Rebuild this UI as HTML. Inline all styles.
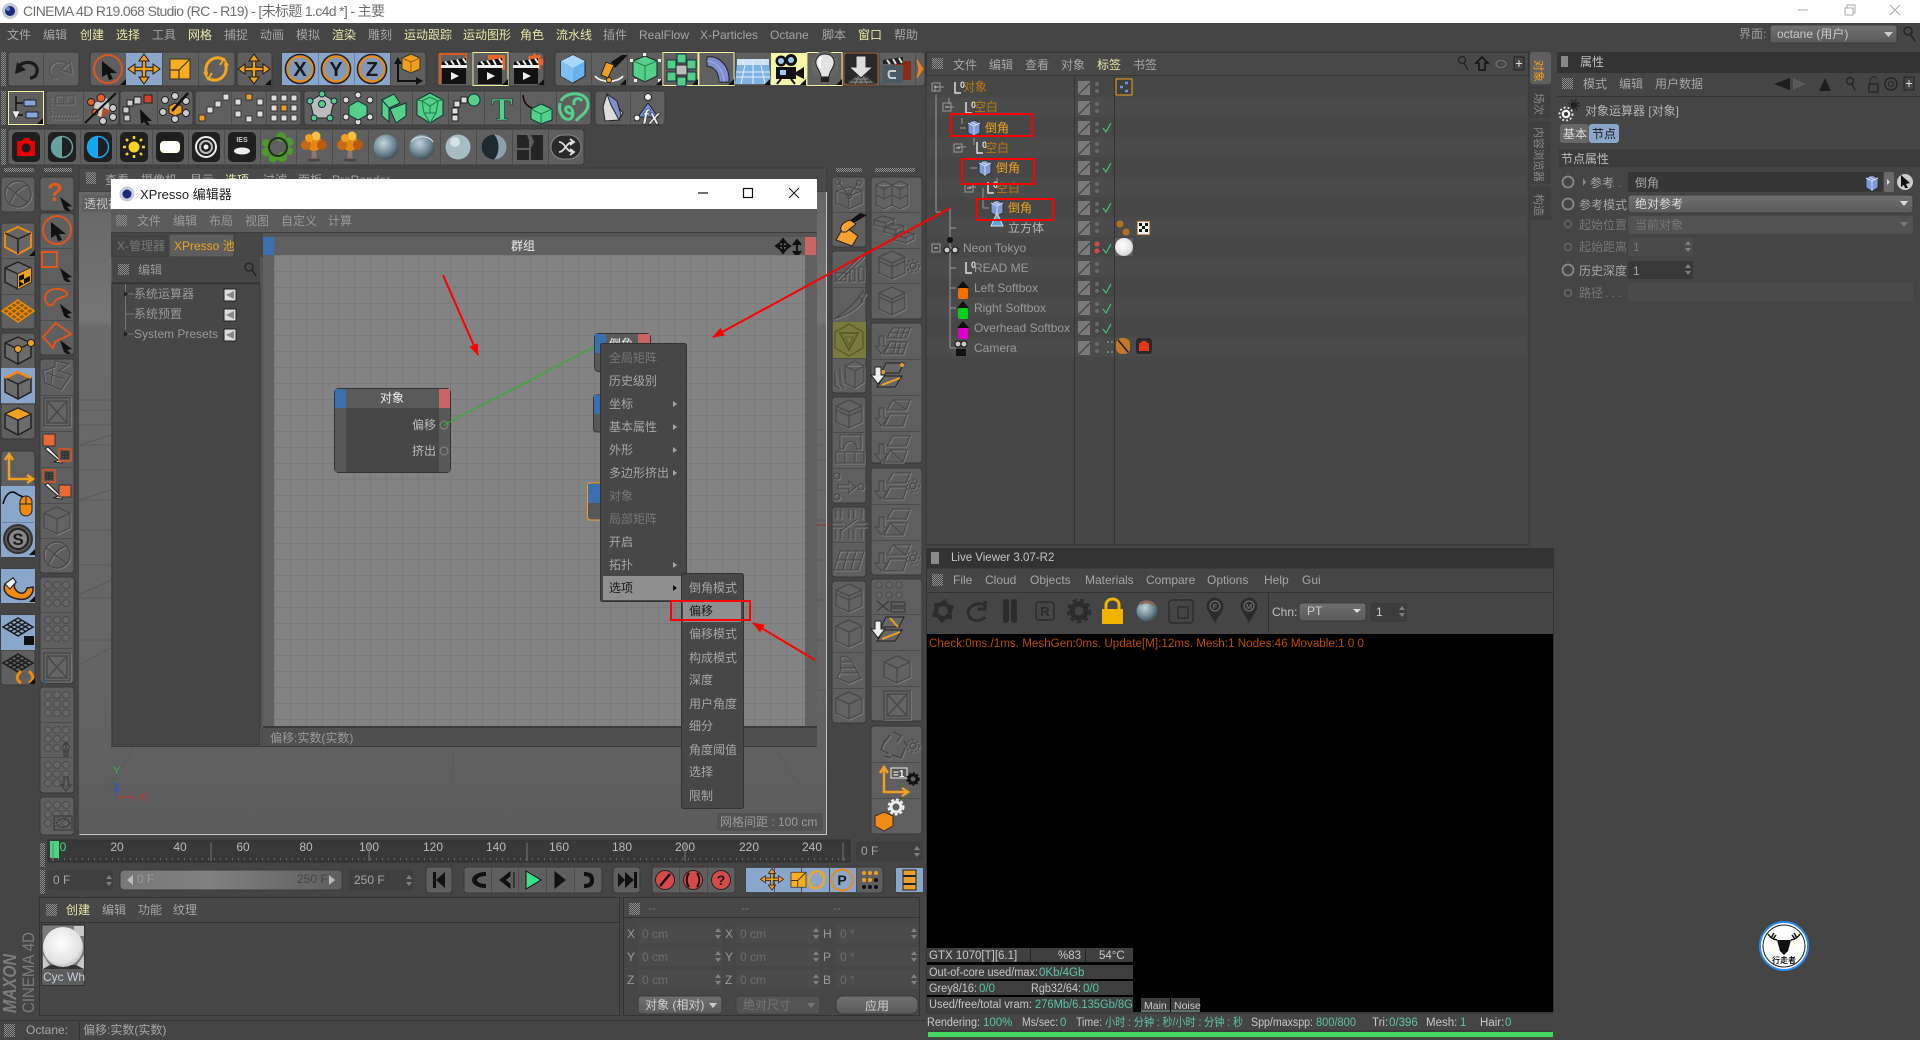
<!DOCTYPE html>
<html><head><meta charset="utf-8"><title>CINEMA 4D</title>
<style>
html,body{margin:0;padding:0;background:#454545;overflow:hidden}
svg{display:block}
text{font-family:"Liberation Sans","Noto Sans CJK SC",sans-serif;font-size:12px;fill:#a6a6a6}
.y{fill:#e8e8a8}.o{fill:#f0a41e}.od{fill:#b8780e}.w{fill:#eee}.d{fill:#767676}.k{fill:#1a1a1a}.m{fill:#9a9a9a}
.s{font-size:11.5px;fill:#c8c8c8}.t{font-size:11.5px;fill:#5cc4a6}.dim{fill:#6e6e6e}
</style></head><body>
<svg width="1920" height="1040" viewBox="0 0 1920 1040" xmlns="http://www.w3.org/2000/svg">
<defs>
<filter id="em" x="-10%" y="-10%" width="125%" height="125%"><feDropShadow dx=".9" dy=".9" stdDeviation="0" flood-color="#7e7e7e"/></filter>
<pattern id="gp" width="2" height="2" patternUnits="userSpaceOnUse"><rect width="1" height="1" fill="#8e8e8e"/><rect x="1" y="1" width="1" height="1" fill="#8e8e8e"/></pattern>
<pattern id="grid" width="16" height="16" patternUnits="userSpaceOnUse" x="274" y="255"><rect width="16" height="16" fill="#838383"/><path d="M0 .5H16M.5 0V16" stroke="#7a7a7a"/></pattern>
<linearGradient id="vp" x1="0" y1="0" x2="0" y2="1"><stop offset="0" stop-color="#666"/><stop offset=".2" stop-color="#767676"/><stop offset=".21" stop-color="#6a6a6a"/><stop offset=".7" stop-color="#666"/><stop offset="1" stop-color="#5c5c5c"/></linearGradient>
<linearGradient id="bt" x1="0" y1="0" x2="0" y2="1"><stop offset="0" stop-color="#707070"/><stop offset="1" stop-color="#5a5a5a"/></linearGradient>
<linearGradient id="sl" x1="0" y1="0" x2="1" y2="0"><stop offset="0" stop-color="#777"/><stop offset=".4" stop-color="#808080"/><stop offset="1" stop-color="#5f5f5f"/></linearGradient>
<radialGradient id="sg" cx=".4" cy=".35" r=".7"><stop offset="0" stop-color="#c4d4dc"/><stop offset=".6" stop-color="#6e8894"/><stop offset="1" stop-color="#37464e"/></radialGradient>
<radialGradient id="sw" cx=".45" cy=".4" r=".7"><stop offset="0" stop-color="#fff"/><stop offset=".7" stop-color="#e2e2e2"/><stop offset="1" stop-color="#aaa"/></radialGradient>
<marker id="ah" markerWidth="12" markerHeight="9" refX="11" refY="4.5" orient="auto" markerUnits="userSpaceOnUse"><path d="M0 0 12 4.5 0 9Z" fill="#f00"/></marker>

<path id="tri" d="M35 33H29L35 27Z" fill="#111"/>
<g id="d1" filter="url(#em)" fill="#636363" stroke="#4a4a4a" stroke-width="1.300"><path d="M18 4 31 10V25L18 31 5 25V10Z"/><path d="M5 10 18 16 31 10M18 16V31" fill="none"/></g>
<g id="d2" filter="url(#em)" fill="#636363" stroke="#4a4a4a" stroke-width="1.300"><path d="M18 3 31 9V25L18 31 5 25V9Z"/><path d="M5 9 18 15 31 9M18 15V31M5 13 18 19 31 13" fill="none"/></g>
<g id="dcd" filter="url(#em)" fill="none" stroke="#4a4a4a" stroke-width="1.300"><path d="M18 10 31 14V26L18 32 5 26V14ZM5 14 18 19 31 14M18 19V32M7 4 18 19 27 6"/><circle cx="7" cy="5" r="2.500"/><circle cx="18" cy="19" r="2.500"/><circle cx="28" cy="6" r="2.500"/></g>
<g id="dblk" filter="url(#em)" fill="#636363" stroke="#4a4a4a" stroke-width="1.200"><path d="M3 7 11 3 19 7V17L11 21 3 17ZM19 7 27 3 35 7V17L27 21 19 17ZM3 17 11 21 19 17V27L11 31 3 27ZM19 17 27 21 35 17V27L27 31 19 27ZM3 7 11 11 19 7M11 11V21M19 7 27 11 35 7M27 11V21"/></g>
<g id="dbrk" filter="url(#em)" fill="#636363" stroke="#4a4a4a" stroke-width="1.200"><path d="M2 7 10 3 22 6 14 10ZM2 7V12L14 15V10ZM22 6V11L14 15M12 14 20 10 32 13 24 17ZM12 14V19L24 22V17ZM32 13V18L24 22M22 22 30 18 42 21 34 25ZM22 22V27L34 30V25ZM42 21V26L34 30"/></g>
<g id="dgr" filter="url(#em)" fill="none" stroke="#4a4a4a" stroke-width="1.500"><circle cx="0" cy="0" r="3"/><circle cx="0" cy="0" r="6" stroke-dasharray="2.500 2"/></g>
<g id="d3" filter="url(#em)" fill="none" stroke="#4a4a4a" stroke-width="1.300"><path d="M17 4H34L30 14H11ZM14 18H31L27 30H8Z"/><path d="M3 12H8V22H12L5.500 30 -1 22H3Z" fill="#636363"/></g>
<g id="d3a" filter="url(#em)" fill="none" stroke="#4a4a4a" stroke-width="1.300"><path d="M17 4H34L30 14H11ZM14 18H31L27 30H8ZM23 4 20 14M29 4 25 14M15 9H32M20 18 17 30M25 18 22 30M11 24H29"/><path d="M3 12H8V22H12L5.500 30 -1 22H3Z" fill="#636363"/></g>
<g id="d3b" filter="url(#em)" fill="none" stroke="#4a4a4a" stroke-width="1.300"><path d="M17 4H34L30 14H11ZM14 18H31L27 30H8ZM17 4 30 14"/><path d="M3 12H8V22H12L5.500 30 -1 22H3Z" fill="#636363"/></g>
<g id="d3c" filter="url(#em)" fill="none" stroke="#4a4a4a" stroke-width="1.300"><path d="M17 4H34L30 14H11ZM14 18H31L27 30H8ZM14 18 27 30"/><path d="M3 12H8V22H12L5.500 30 -1 22H3Z" fill="#636363"/></g>
<g id="dk" filter="url(#em)" fill="#636363" stroke="#4a4a4a" stroke-width="1.300"><path d="M3 32C12 26 22 18 28 10L32 14C26 22 16 28 3 32ZM26 12 32 4 35 7 30 15"/></g>
<g id="dbk" filter="url(#em)" fill="#636363" stroke="#4a4a4a" stroke-width="1.200"><path d="M14 8 24 3 33 8V24L24 30 14 25ZM14 8 24 13 33 8M24 13V30M9 10V27L14 30M4 13V28L9 31"/></g>
<g id="d5" filter="url(#em)" fill="none" stroke="#4a4a4a" stroke-width="1.300"><path d="M4 30 31 4 33 6 9 30ZM5 22H15V30H5ZM19 18V30H24V18ZM28 16V30H33V16Z"/></g>
<g id="darc" filter="url(#em)" fill="none" stroke="#4a4a4a" stroke-width="1.300"><path d="M9 3H30V17H26C26 7 13 7 13 17H9ZM5 20H33V31H5ZM14 20V31M24 20V31"/></g>
<g id="darr" filter="url(#em)" fill="none" stroke="#4a4a4a" stroke-width="1.300"><circle cx="6" cy="7" r="3"/><circle cx="6" cy="28" r="3"/><circle cx="30" cy="18" r="3"/><path d="M7 16H18V12L25 18 18 24V20H7Z"/></g>
<g id="dcut" filter="url(#em)" fill="none" stroke="#4a4a4a" stroke-width="1.300"><path d="M5 2V12M5 22V32M18 2V12M18 22V32M31 2V12M31 22V32M10 2V12M10 22V32M23 2V12M23 22V32M1 16H12M24 16H36M1 20H12M24 20H36M10 24 26 12"/></g>
<g id="dgp" filter="url(#em)" fill="none" stroke="#4a4a4a" stroke-width="1.300"><path d="M9 9H33L27 28H3ZM17 9 12 28M25 9 20 28M6 18H30"/></g>
<g id="d6" fill="#666" stroke="#4c4c4c"><circle cx="9" cy="8" r="3.500"/><circle cx="18" cy="8" r="3.500"/><circle cx="27" cy="8" r="3.500"/><circle cx="9" cy="17" r="3.500"/><circle cx="18" cy="17" r="3.500"/><circle cx="27" cy="17" r="3.500"/><circle cx="9" cy="26" r="3.500"/><circle cx="18" cy="26" r="3.500"/><circle cx="27" cy="26" r="3.500"/></g>
<g id="d7" filter="url(#em)" fill="none" stroke="#4a4a4a" stroke-width="1.500"><circle cx="18" cy="17" r="13"/><path d="M7 10C14 14 22 22 28 26M10 26C14 16 20 10 28 8"/></g>
<g id="d8" filter="url(#em)" fill="#656565" stroke="#4a4a4a" stroke-width="1.500"><rect x="5" y="3" width="26" height="28"/><rect x="8" y="6" width="20" height="22"/><path d="M8 6 28 28M28 6 8 28" fill="none"/></g>
<g id="d9" filter="url(#em)" fill="none" stroke="#4a4a4a" stroke-width="1.300"><path d="M10 5C16 3 22 8 23 14L30 26 18 31 6 26 10 18ZM10 10H22M9 16H25M8 21H28"/></g>
<g id="dst" filter="url(#em)" fill="none" stroke="#4a4a4a" stroke-width="1.300"><path d="M16 2 30 5 20 12 32 16 22 31 6 24 4 12 16 8ZM8 14 24 20M14 10 12 26"/></g>
<g id="dlens" fill="none" stroke="#3e3e3e" stroke-width="1.300"><rect x="15" y="19" width="18" height="14"/><path d="M17 26C22 20 26 20 31 26C26 32 22 32 17 26Z"/></g>
<g id="drec" filter="url(#em)" fill="none" stroke="#4a4a4a" stroke-width="2"><path d="M16 4 24 8 20 14M8 12 4 22 12 26M28 20 24 30 15 27M13 7 8 14M27 13 32 20M7 28 14 30"/></g>

<g id="cube"><path d="M18 4 31 10V24L18 31 5 24V10Z" fill="#6b6b6b" stroke="#222" stroke-width="1.500"/><path d="M5 10 18 16 31 10M18 16V31" fill="none" stroke="#222" stroke-width="1.500"/></g>
<g id="ic1"><path d="M18 4 31 10V24L18 31 5 24V10Z" fill="#666" stroke="#f08a10" stroke-width="2"/><path d="M5 10 18 16 31 10M18 16V31" fill="none" stroke="#222" stroke-width="1.500"/></g>
<g id="ic2"><use href="#cube"/><path d="M18 16 31 10V24L18 31Z" fill="#f0a020"/><path d="M19 18 24 16V21L19 23ZM24 21 30 18V23L24 26ZM19 23V29L24 26Z" fill="#111"/></g>
<g id="ic3" fill="none" stroke="#e8890c" stroke-width="1.600"><path d="M18 6 34 17 18 28 2 17Z" fill="#8b5a12"/><path d="M10 11 26 23M14 8.500 30 20M6 14 22 26M26 11 10 23M22 8.500 6 20M30 14 14 26"/></g>
<g id="ic4"><use href="#cube"/><circle cx="18" cy="16" r="3.500" fill="#f0a020" stroke="#222"/><circle cx="31" cy="10" r="3.500" fill="#f0a020" stroke="#222"/></g>
<g id="ic5"><use href="#cube"/><path d="M5 10 18 4 31 10" fill="none" stroke="#f08a10" stroke-width="2.500"/></g>
<g id="ic6"><use href="#cube"/><path d="M18 4 31 10 18 16 5 10Z" fill="#f0a020" stroke="#222"/></g>
<g id="axis" fill="none" stroke="#f0a020" stroke-width="2.500"><path d="M9 5V28H31"/><path d="M5 9 9 3 13 9M27 24 33 28 27 32"/></g>
<g id="mouse"><path d="M3 18C6 6 12 4 17 8C20 10 22 10 25 12" fill="none" stroke="#111" stroke-width="1.600"/><rect x="20" y="10" width="12" height="20" rx="6" fill="#f08a10" stroke="#222"/><path d="M20 18H32M26 10V18" stroke="#222"/></g>
<g id="sic"><circle cx="18" cy="17" r="14" fill="#555" stroke="#333" stroke-width="2"/><circle cx="18" cy="17" r="10" fill="#888" stroke="#222" stroke-width="2"/><text x="18" y="23" text-anchor="middle" class="k" style="font-size:17px;font-weight:bold">S</text></g>
<g id="mag"><path d="M5 15 13 9 16 13C13 16 14 20 18 23 23 26 26 23 27 19L33 18C34 26 27 32 18 30 7 28 2 22 5 15Z" fill="#f08a10" stroke="#222" stroke-width="1.500"/><path d="M5 15 13 9 16 13 10 20Z" fill="#eee" stroke="#222"/></g>
<g id="gridb" fill="none" stroke="#1c1c1c" stroke-width="1.500"><path d="M18 3 33 12 18 21 3 12ZM10 7.500 26 16.500M14 5 29 14M7 9.500 22 18.500M26 7.500 10 16.500M22 5 7 14M29 9.500 14 18.500"/></g>
<g id="qm"><text x="15" y="24" text-anchor="middle" style="font-size:26px;font-weight:bold;fill:#e05a20">?</text><path d="M20 20 32 29 27 30 31 34H27L24 32Z" fill="#111"/></g>
<g id="cur2"><circle cx="17" cy="17" r="14" fill="none" stroke="#e0561c" stroke-width="2"/><path d="M11 9 26 21 19 21 22 27 18 28 16 22 11 25Z" fill="#111"/></g>
<g id="sel1"><rect x="2" y="4" width="15" height="15" fill="none" stroke="#e0561c" stroke-width="2"/><path d="M20 20 32 29 27 30 31 34H27L24 32Z" fill="#111"/></g>
<g id="sel2"><path d="M5 14C5 4 22 2 27 9 29 13 18 13 15 17 12 24 6 22 5 14Z" fill="none" stroke="#e0561c" stroke-width="2"/><path d="M20 20 32 29 27 30 31 34H27L24 32Z" fill="#111"/></g>
<g id="sel3"><path d="M16 3 31 14 15 22 13 28 3 17Z" fill="none" stroke="#e0561c" stroke-width="2"/><path d="M20 20 32 29 27 30 31 34H27L24 32Z" fill="#111"/></g>
<g id="sw1"><rect x="3" y="3" width="12" height="12" fill="#ea6a35" stroke="#333"/><path d="M5 18 18 29 14 31 22 32 22 24 19 27 8 16Z" fill="#eee" stroke="#222"/><rect x="19" y="18" width="12" height="12" fill="#555" stroke="#e0561c" stroke-width="1.500"/><path d="M22 21H28V27H22ZM25 21V27M22 24H28" fill="none" stroke="#222"/></g>
<g id="sw2"><rect x="3" y="3" width="12" height="12" fill="#555" stroke="#e0561c" stroke-width="1.500"/><path d="M6 6H12V12H6ZM9 6V12M6 9H12" fill="none" stroke="#222"/><path d="M5 18 18 29 14 31 22 32 22 24 19 27 8 16Z" fill="#eee" stroke="#222"/><rect x="19" y="18" width="12" height="12" fill="#ea6a35" stroke="#333"/></g>

<g id="undo" fill="none" stroke="#1a1a1a" stroke-width="3.200"><path d="M12 13C20 7 31 12 29 20 28 25 24 26 22 26"/><path d="M7 22 9 10 18 18Z" fill="#1a1a1a" stroke="none"/></g>
<g id="redo" filter="url(#em)" fill="none" stroke="#525252" stroke-width="1.500"><path d="M24 12C16 6 5 12 7 20 8 25 12 26 14 26"/><path d="M29 22 27 10 18 18Z"/></g>
<g id="mv"><path d="M18 6V28M6 17H30" stroke="#1a1a1a" stroke-width="4.500"/><path d="M18 6V28M6 17H30" stroke="#f0a020" stroke-width="2.500"/><path d="M18 2 23 9H13ZM18 32 23 25H13ZM2 17 9 12V22ZM34 17 27 12V22Z" fill="#f0a020" stroke="#1a1a1a"/></g>
<g id="scl"><rect x="8" y="7" width="20" height="20" fill="#f8ae1e" stroke="#333"/><path d="M8 18H17L28 7M17 18V27" fill="none" stroke="#4a3410" stroke-width="1.200"/></g>
<g id="rot" fill="none" stroke="#f0a820" stroke-width="3"><path d="M26 8C16 1 4 12 9 23"/><path d="M10 26C20 33 32 22 27 11"/><path d="M6 20 10 27 14 21M30 14 26 7 22 13" stroke-width="2"/></g>
<g id="ring"><circle cx="18" cy="17" r="14.500" fill="none" stroke="#222" stroke-width="1.600"/><circle cx="18" cy="17" r="12.500" fill="#7f99bb" stroke="#e88a14" stroke-width="2.200"/></g>
<g id="coord"><path d="M8 8V29H30" fill="none" stroke="#111" stroke-width="2"/><path d="M4 12 8 5 12 12M26 25 33 29 26 33" fill="#111"/><path d="M21 2 30 6V17L21 21 12 17V6Z" fill="#f0a020" stroke="#333"/><path d="M12 6 21 10 30 6M21 10V21" fill="none" stroke="#9b5e0a"/></g>
<g id="clap"><rect x="5" y="15" width="24" height="17" fill="#111"/><path d="M5 10 29 6V14H5Z" fill="#111"/><path d="M5 14H29V15H5ZM8 9.500 11 13M14 8.500 17 13M20 7.500 23 13M26 6.500 29 11" stroke="#eee" stroke-width="2"/><path d="M14 20 22 24 14 28Z" fill="#eee"/></g>
<g id="bcube"><path d="M18 3 30 9V24L18 31 6 24V9Z" fill="#6bb0e8" stroke="#222"/><path d="M18 3 30 9 18 16 6 9Z" fill="#a8d8f8"/><path d="M18 16 6 9V24L18 31Z" fill="#7fc0f4"/></g>
<g id="pen"><path d="M20 10 31 3H36V4L24 16Z" fill="#111"/><path d="M23 13 17 26 10 23 15 10Z" fill="#f0a020" stroke="#222"/><path d="M4 24C9 31 27 31 32 24" fill="none" stroke="#eee" stroke-width="1.800"/><circle cx="18" cy="28" r="2.500" fill="#f0a020" stroke="#222"/></g>
<g id="gcube"><path d="M18 4 30 9V24L18 30 6 24V9Z" fill="#55d08a" stroke="#222"/><path d="M6 9 18 14 30 9M18 14V30" fill="none" stroke="#1f7f4c"/><rect x="3" y="7" width="3" height="3" fill="#eee"/><rect x="31" y="7" width="3" height="3" fill="#eee"/><rect x="16" y="1" width="3" height="3" fill="#eee"/><rect x="31" y="27" width="3" height="3" fill="#eee"/><rect x="7" y="27" width="3" height="3" fill="#eee"/></g>
<g id="clon"><g fill="#55cf88" stroke="#134"><rect x="14" y="2" width="9" height="9"/><rect x="24" y="8" width="9" height="9"/><rect x="24" y="20" width="9" height="9"/><rect x="14" y="25" width="9" height="9"/><rect x="4" y="20" width="9" height="9"/><rect x="4" y="8" width="9" height="9"/></g><rect x="13" y="13" width="11" height="10" fill="#bbb" stroke="#222"/></g>
<g id="bend"><path d="M8 5C20 3 31 14 30 30H20C20 21 16 15 8 14Z" fill="#7f8fd0" stroke="#222"/><path d="M8 9C17 9 25 18 25 30" fill="none" stroke="#a0aee8"/></g>
<g id="floor"><path d="M2 7H34V13H2Z" fill="#cfe2f5"/><path d="M2 13H34L36 32H0Z" fill="#7fb2e4"/><path d="M10 13 6 32M18 13V32M26 13 30 32M1 20H35M1 25H35M8 7V13M18 7V13M28 7V13" stroke="#e4f0fa" stroke-width="1"/></g>
<g id="cam"><circle cx="10" cy="9" r="5.500" fill="#111"/><circle cx="20" cy="8" r="6" fill="#111"/><circle cx="10" cy="9" r="3" fill="#9cc8f0"/><circle cx="20" cy="8" r="3" fill="#9cc8f0"/><rect x="5" y="15" width="20" height="12" fill="#111"/><rect x="9" y="18" width="6" height="5" fill="#9cc8f0"/><path d="M25 20 33 15V27L25 23Z" fill="#111"/><path d="M10 27 6 32M20 27 24 32" stroke="#111" stroke-width="2"/></g>
<g id="bulb"><circle cx="18" cy="13" r="14" fill="#666"/><path d="M18 2C10 2 7 9 10 15 12 19 14 21 14 25H22C22 21 24 19 26 15 29 9 26 2 18 2Z" fill="#e4e4e4" stroke="#222"/><path d="M15 5C11 8 12 13 14 16" stroke="#fff" fill="none" stroke-width="2"/><rect x="14" y="25" width="8" height="5" fill="#222"/></g>
<g id="dnf"><rect x="1" y="1" width="34" height="32" rx="3" fill="#2a2a2a" stroke="#a85a30"/><path d="M3 32 18 20 33 32Z" fill="#444"/><path d="M7 30H29M11 27H25M18 20V32M12 32 18 20M24 32 18 20" stroke="#8a8a8a"/><path d="M13 4H23V15H30L18 26 6 15H13Z" fill="#ddd" stroke="#222"/></g>
<g id="clap2"><rect x="14" y="9" width="18" height="19" fill="#8a2c14"/><rect x="4" y="13" width="20" height="18" fill="#4a5a64"/><path d="M4 8 24 5V12H4Z" fill="#222"/><path d="M8 8 11 12M14 7 17 12M20 6 23 11" stroke="#ddd" stroke-width="2"/><path d="M17 19H11C9 19 9 26 12 26H17" fill="none" stroke="#ccc" stroke-width="2"/></g>

<g id="hier"><path d="M8 5V24M8 12H15M8 24H15" stroke="#111" stroke-width="1.500" fill="none"/><rect x="16" y="9" width="12" height="6" fill="#8aa4dc" stroke="#222"/><rect x="18" y="21" width="12" height="6" fill="#8aa4dc" stroke="#222"/><path d="M4 20H8V14H8V20H12L8 28Z" fill="#eee" stroke="#222" stroke-width=".5"/></g>
<g id="dimt" filter="url(#em)" fill="none" stroke="#4e4e4e" stroke-width="1.200"><rect x="10" y="5" width="8" height="8"/><rect x="20" y="5" width="8" height="8"/><path d="M5 6V28H32M5 24H32" stroke-dasharray="2 1"/></g>
<g id="dn1"><path d="M12 12 24 7 28 20 18 26 10 22Z" fill="#ccc"/><path d="M20 16 28 20 18 28Z" fill="#a8502c"/><circle cx="18" cy="7" r="4" fill="#e8602c" stroke="#222"/><circle cx="8" cy="11" r="3.500" fill="#e8602c" stroke="#222"/><circle cx="30" cy="17" r="3.500" fill="#ccc" stroke="#222"/><circle cx="12" cy="21" r="3" fill="#e8602c" stroke="#222"/><circle cx="30" cy="26" r="3.500" fill="#ccc" stroke="#222"/><circle cx="20" cy="30" r="3.500" fill="#ccc" stroke="#222"/><path d="M2 32 33 2" stroke="#111" stroke-width="2"/></g>
<g id="nl"><rect x="4" y="24" width="6" height="6" fill="#ccc" stroke="#222"/><rect x="3" y="16" width="6" height="6" fill="#ccc" stroke="#222"/><rect x="7" y="9" width="6" height="6" fill="#ccc" stroke="#222"/><rect x="14" y="6" width="7" height="7" fill="#ccc" stroke="#222"/><rect x="24" y="4" width="8" height="8" fill="#d84028" stroke="#222"/><path d="M20 18 32 30 27 30 30 34 27 34 24 31 21 33Z" fill="#111"/></g>
<g id="nl2"><circle cx="8" cy="9" r="3.500" fill="#ccc" stroke="#222"/><circle cx="18" cy="5" r="3.500" fill="#ccc" stroke="#222"/><circle cx="29" cy="10" r="3.500" fill="#ccc" stroke="#222"/><circle cx="6" cy="21" r="3.500" fill="#ccc" stroke="#222"/><circle cx="29" cy="22" r="3.500" fill="#ccc" stroke="#222"/><circle cx="18" cy="28" r="3.500" fill="#ccc" stroke="#222"/><path d="M18 12 25 15V22L18 25 12 22V15Z" fill="#f0a020" stroke="#222"/><path d="M15 20 31 2" stroke="#111" stroke-width="2.500"/></g>
<g id="p1" fill="#ddd" stroke="#333"><rect x="4" y="24" width="6" height="6" fill="#f0a020"/><rect x="12" y="16" width="6" height="6"/><rect x="20" y="10" width="6" height="6"/><rect x="28" y="3" width="6" height="6"/></g>
<g id="p2" fill="#ddd" stroke="#333"><rect x="15" y="3" width="6" height="6" fill="#f0a020"/><rect x="26" y="8" width="6" height="6"/><rect x="26" y="20" width="6" height="6"/><rect x="15" y="25" width="6" height="6"/><rect x="4" y="20" width="6" height="6"/><rect x="4" y="8" width="6" height="6"/></g>
<g id="p3" fill="#ddd" stroke="#333"><rect x="5" y="4" width="6" height="6"/><rect x="15" y="4" width="6" height="6"/><rect x="25" y="4" width="6" height="6"/><rect x="5" y="14" width="6" height="6"/><rect x="15" y="14" width="6" height="6" fill="#f0a020"/><rect x="25" y="14" width="6" height="6"/><rect x="5" y="24" width="6" height="6"/><rect x="15" y="24" width="6" height="6"/><rect x="25" y="24" width="6" height="6"/></g>
<g id="g1"><path d="M18 3 30 10 26 27 10 27 6 10Z" fill="#bbb" stroke="#222"/><g fill="#55cf88" stroke="#124"><circle cx="18" cy="13" r="3.500"/><circle cx="6" cy="10" r="3"/><circle cx="30" cy="10" r="3"/><circle cx="10" cy="27" r="3"/><circle cx="26" cy="27" r="3"/><circle cx="18" cy="3" r="3"/></g></g>
<g id="g2"><g fill="#ddd" stroke="#222"><circle cx="6" cy="9" r="3"/><circle cx="30" cy="9" r="3"/><circle cx="6" cy="26" r="3"/><circle cx="30" cy="26" r="3"/><circle cx="18" cy="4" r="3"/><circle cx="18" cy="31" r="3"/></g><path d="M18 10 27 15V24L18 29 9 24V15Z" fill="#55d08a" stroke="#133"/></g>
<g id="g3"><path d="M6 9 18 3 24 12 13 17ZM13 17V31L6 25V9ZM14 18 30 12V25L20 32Z" fill="#55d08a" stroke="#133"/></g>
<g id="g4"><path d="M18 2 31 9V24L18 32 5 24V9Z" fill="#55d08a" stroke="#133"/><path d="M10 10 18 6 26 10 24 22 12 22ZM12 22 18 32M24 22 18 32M5 9 10 10M31 9 26 10M10 10 18 15 26 10M18 15V22" fill="none" stroke="#1d7a47"/></g>
<g id="g5"><g fill="#ddd" stroke="#222"><rect x="5" y="24" width="6" height="6"/><rect x="5" y="17" width="6" height="6"/><rect x="7" y="10" width="6" height="6"/><rect x="14" y="6" width="6" height="6"/></g><circle cx="27" cy="9" r="6" fill="#55d08a" stroke="#133"/></g>
<text id="g6" x="18" y="29" text-anchor="middle" style="font-family:'Liberation Serif',serif;font-size:32px;font-weight:bold;fill:#55d08a;stroke:#133;stroke-width:.6">T</text>
<g id="g7"><path d="M3 4C4 14 8 15 14 18" fill="none" stroke="#111" stroke-width="1.600"/><path d="M21 13 32 18V29L21 33 11 28V18Z" fill="#55d08a" stroke="#133"/><path d="M11 18 21 23 32 18M21 23V33" fill="none" stroke="#1d7a47"/></g>
<g id="g8" fill="none" stroke="#55d08a" stroke-width="3"><path d="M5 10C10 0 30 0 32 12 33 22 22 26 20 30M4 12C2 22 8 30 14 28 20 25 16 14 11 16 7 18 12 24 16 22M26 10C22 5 17 8 18 14"/></g>
<g id="de"><path d="M12 3 28 22 24 29 10 30 8 16Z" fill="#ddd" stroke="#222"/><path d="M12 3 22 10 26 24 24 29 16 14Z" fill="#7f8fd0" stroke="#222"/></g>
<g id="fx"><path d="M18 12 28 26H8Z" fill="#7090e0" stroke="#222"/><circle cx="18" cy="6" r="3.500" fill="#eee" stroke="#222"/><circle cx="7" cy="27" r="3" fill="#eee" stroke="#222"/><text x="21" y="33" text-anchor="middle" style="font-size:20px;font-weight:bold;font-style:italic;fill:#eee;stroke:#111;stroke-width:.5">fx</text></g>

<rect id="tile" x="4" y="3" width="28" height="30" rx="5" fill="#1f1f1f"/>
<g id="o1"><use href="#tile"/><path d="M9 12H14L16 9H21L23 12H27V27H9Z" fill="#e40000"/><circle cx="18" cy="19" r="4.500" fill="#1a1a1a"/></g>
<g id="o2"><use href="#tile"/><circle cx="18" cy="18" r="10.500" fill="#1f1f1f" stroke="#6aa0a0" stroke-width="1.500"/><path d="M18 7A11 11 0 0 0 18 29Z" fill="#6aa0a0"/></g>
<g id="o3"><use href="#tile"/><circle cx="18" cy="18" r="10.500" fill="#1f1f1f" stroke="#14a8f0" stroke-width="1.500"/><path d="M18 7A11 11 0 0 0 18 29Z" fill="#14a8f0"/></g>
<g id="o4"><use href="#tile"/><circle cx="18" cy="18" r="5.500" fill="#f8d420"/><path d="M18 7V10M18 26V29M7 18H10M26 18H29M10 10 12 12M24 24 26 26M26 10 24 12M12 24 10 26" stroke="#f8d420" stroke-width="2.500"/></g>
<g id="o5"><use href="#tile"/><rect x="9" y="13" width="18" height="10" rx="3" fill="#fff" stroke="#ffe" stroke-width="2"/></g>
<g id="o6"><use href="#tile"/><circle cx="18" cy="18" r="10" fill="none" stroke="#eee" stroke-width="2"/><circle cx="18" cy="18" r="6" fill="none" stroke="#bbb" stroke-width="2"/><circle cx="18" cy="18" r="2.500" fill="#eee"/></g>
<g id="o7"><use href="#tile"/><text x="18" y="13" text-anchor="middle" style="font-size:7px;font-weight:bold;fill:#ccc">IES</text><ellipse cx="18" cy="22" rx="8" ry="3.500" fill="#eee"/></g>
<g id="o8"><g fill="#4e9a2c"><circle cx="21" cy="8" r="5"/><circle cx="29" cy="13" r="4.500"/><circle cx="29" cy="22" r="4"/><circle cx="22" cy="28" r="5"/><circle cx="13" cy="29" r="4.500"/><circle cx="6" cy="23" r="4.500"/><circle cx="6" cy="14" r="4"/></g><circle cx="18" cy="18" r="9" fill="none" stroke="#22301a" stroke-width="2"/></g>
<g id="o9"><path d="M16 21 15 31H21L20 21Z" fill="#8d7a6e"/><ellipse cx="18" cy="31" rx="7" ry="1.500" fill="#444"/><circle cx="18" cy="14" r="8" fill="#e08a14"/><circle cx="10" cy="16" r="5" fill="#c86a12"/><circle cx="26" cy="16" r="5" fill="#b85a12"/><circle cx="20" cy="7" r="4.500" fill="#f8c040"/><circle cx="13" cy="9" r="4" fill="#f0a020"/></g>
<g id="o10"><circle cx="18" cy="18" r="12.500" fill="url(#sg)"/></g>
<g id="o11"><circle cx="18" cy="18" r="12.500" fill="url(#sg)"/><path d="M7 13C11 6 25 6 29 13" fill="none" stroke="#dfe8ee" stroke-width="1"/></g>
<g id="o12"><circle cx="18" cy="18" r="12.500" fill="#a8bcc4"/><circle cx="15" cy="13" r="5" fill="#d4e2e8"/></g>
<g id="o13"><circle cx="18" cy="18" r="12.500" fill="#8ba0ac"/><path d="M18 5.500A12.500 12.500 0 0 0 18 30.500C24 24 24 12 18 5.500Z" fill="#1e2a30"/></g>
<g id="o14"><path d="M5 6H15L17 11V19H5ZM5 21H17V31H5ZM19 6H31V31H19V19L22 13Z" fill="#252525"/></g>
<g id="o15"><rect x="3" y="6" width="30" height="24" rx="12" fill="#2a2a2a" stroke="#888"/><path d="M11 13C17 13 18 23 25 23M11 23C17 23 18 13 25 13M22 10 26 13 22 16M22 20 26 23 22 26" fill="none" stroke="#ddd" stroke-width="1.800"/></g>

<g id="nul"><path d="M2 3V14H8" fill="none" stroke="#ddd" stroke-width="1.500"/><text x="7" y="9" style="font-size:9px;font-weight:bold;fill:#ddd">0</text></g>
<g id="bev"><path d="M7 1 13 4V14L7 17 1 14V4Z" fill="#7f9ad8" stroke="#333"/><path d="M1 4 7 7 13 4M7 7V17M4 3 10 6" fill="none" stroke="#cdd8f4"/></g>
<g id="lay"><rect width="12" height="14" fill="#7a7a7a"/><path d="M0 14 12 2" stroke="#4a4a4a" stroke-width="1.500"/></g>
<g id="dts"><circle cx="3" cy="3" r="2" fill="#6a6a6a"/><circle cx="3" cy="10" r="2" fill="#6a6a6a"/></g>
<g id="chk"><path d="M0 5 3 9 8 0" fill="none" stroke="#45d87a" stroke-width="1"/></g>
<g id="exp"><rect width="8" height="8" fill="none" stroke="#9a9a9a"/><path d="M2 4H6" stroke="#ccc"/></g>
<g id="soft"><path d="M6 0 12 7H0Z" fill="#111"/></g>
<g id="spin"><path d="M0 4 3 0 6 4ZM0 7 3 11 6 7Z" fill="#808080"/></g>
<g id="sph"><rect x="-2" y="-2" width="12" height="12" fill="#ddd" stroke="#222"/><path d="M0 4 8 0V8ZM1 4H7" fill="#888"/></g>
<g id="port"><circle r="4" fill="none" stroke="#888" stroke-width="1"/></g>
</defs>

<rect width="1920" height="1040" fill="#454545"/>

<!-- Title bar -->
<rect width="1920" height="23" fill="#fff"/>
<circle cx="10" cy="11" r="8" fill="#c6cbd8"/><circle cx="10" cy="11" r="5" fill="#1c2a78"/><circle cx="8" cy="9" r="2" fill="#6c88d0"/>
<text x="23" y="16" style="font-size:14px;fill:#6e6e6e" textLength="362">CINEMA 4D R19.068 Studio (RC - R19) - [未标题 1.c4d *] - 主要</text>
<path d="M1798 10H1808" stroke="#aaa"/><path d="M1845 8H1853V15H1845ZM1847 8V5H1855V13H1853" fill="#fff" stroke="#aaa"/><path d="M1890 5 1900 15M1900 5 1890 15" stroke="#aaa"/>

<!-- Top menu -->
<g>
<text x="7" y="39">文件</text><text x="43" y="39">编辑</text><text x="80" y="39" class="y">创建</text><text x="116" y="39" class="y">选择</text><text x="152" y="39">工具</text><text x="188" y="39" class="y">网格</text><text x="224" y="39">捕捉</text><text x="260" y="39">动画</text><text x="296" y="39">模拟</text><text x="332" y="39" class="y">渲染</text><text x="368" y="39">雕刻</text><text x="404" y="39" class="y">运动跟踪</text><text x="463" y="39" class="y">运动图形</text><text x="520" y="39" class="y">角色</text><text x="556" y="39" class="y">流水线</text><text x="603" y="39">插件</text><text x="639" y="39">RealFlow</text><text x="700" y="39">X-Particles</text><text x="770" y="39">Octane</text><text x="822" y="39">脚本</text><text x="858" y="39" class="y">窗口</text><text x="894" y="39">帮助</text>
</g>
<text x="1739" y="38" class="m">界面:</text>
<rect x="1770" y="25" width="127" height="18" rx="3" fill="url(#bt)" stroke="#3c3c3c"/><text x="1777" y="38" style="fill:#c8c8c8">octane (用户)</text><path d="M1884 32H1893L1888.500 37Z" fill="#ccc"/>
<circle cx="1908" cy="31" r="4" fill="none" stroke="#222" stroke-width="1.500"/><path d="M1911 35 1915 41" stroke="#222" stroke-width="1.500"/>

<!-- Toolbar rows -->
<rect x="1" y="52" width="5" height="34" fill="url(#gp)"/><rect x="1" y="91" width="5" height="34" fill="url(#gp)"/><rect x="1" y="129" width="5" height="36" fill="url(#gp)"/>
<g fill="#5f5f5f" stroke="#393939">
<rect x="8" y="52" width="71" height="34" rx="3"/><rect x="90" y="52" width="145" height="34" rx="3"/><rect x="237" y="52" width="35" height="34" rx="3"/><rect x="282" y="52" width="144" height="34" rx="3"/><rect x="437" y="52" width="107" height="34" rx="3"/><rect x="555" y="52" width="370" height="34" rx="3"/>
<rect x="8" y="91" width="36" height="34" rx="3"/><rect x="46" y="91" width="73" height="34" rx="3"/><rect x="120" y="91" width="73" height="34" rx="3"/><rect x="195" y="91" width="106" height="34" rx="3"/><rect x="304" y="91" width="287" height="34" rx="3"/><rect x="595" y="91" width="70" height="34" rx="3"/>
<rect x="8" y="129" width="576" height="36" rx="3"/>
</g>
<path d="M43.500 53V85M162.500 53V85M198.500 53V85M390.500 53V85M473.500 53V85M509.500 53V85M591.500 53V85M627.500 53V85M663.500 53V85M699.500 53V85M735.500 53V85M771.500 53V85M807.500 53V85M843.500 53V85M879.500 53V85M915.500 53V85M83.500 92V124M157.500 92V124M231.500 92V124M266.500 92V124M340.500 92V124M376.500 92V124M412.500 92V124M448.500 92V124M484.500 92V124M520.500 92V124M556.500 92V124M630.500 92V124M44.500 130V164M80.500 130V164M116.500 130V164M152.500 130V164M188.500 130V164M224.500 130V164M260.500 130V164M296.500 130V164M332.500 130V164M368.500 130V164M404.500 130V164M440.500 130V164M476.500 130V164M512.500 130V164M548.500 130V164" stroke="#4c4c4c"/>
<rect x="126" y="53" width="36" height="32" fill="#8aa6cb"/><rect x="282" y="53" width="108" height="32" fill="#8aa6cb"/><path d="M318.500 53V85M354.500 53V85" stroke="#6e85a5"/>
<rect x="771" y="53" width="36" height="32" fill="#f6f6a8"/>
<g fill="none" stroke="#f2f2a0"><rect x="473" y="52.500" width="35" height="33"/><rect x="663" y="52.500" width="35" height="33"/><rect x="699" y="52.500" width="35" height="33"/><rect x="807" y="52.500" width="35" height="33"/><rect x="8.500" y="91.500" width="35" height="33"/></g>
<use href="#undo" x="8" y="52"/><use href="#redo" x="43" y="52"/>
<use href="#cur2" x="91" y="52"/><use href="#mv" x="126" y="52"/><use href="#scl" x="162" y="52"/><use href="#rot" x="198" y="52"/><use href="#mv" x="236" y="52"/>
<use href="#ring" x="282" y="52"/><use href="#ring" x="318" y="52"/><use href="#ring" x="354" y="52"/>
<text x="300" y="76" text-anchor="middle" class="k" style="font-size:20px;font-weight:bold">X</text><text x="336" y="76" text-anchor="middle" class="k" style="font-size:20px;font-weight:bold">Y</text><text x="372" y="76" text-anchor="middle" class="k" style="font-size:20px;font-weight:bold">Z</text>
<use href="#coord" x="390" y="52"/>
<path d="M440 84V54H466V62" fill="none" stroke="#e05a20" stroke-width="2"/><use href="#clap" x="437" y="52"/><rect x="488" y="55" width="17" height="15" rx="1" fill="#e8662c"/><use href="#clap" x="473" y="52"/><circle cx="535" cy="62" r="7" fill="#e8662c"/><circle cx="535" cy="62" r="7.500" fill="none" stroke="#e8662c" stroke-width="2" stroke-dasharray="3 2.500"/><circle cx="535" cy="62" r="3" fill="#5d5d5d"/><use href="#clap" x="509" y="52"/>
<use href="#bcube" x="555" y="52"/><use href="#pen" x="591" y="52"/><use href="#gcube" x="627" y="52"/><use href="#clon" x="663" y="52"/><use href="#bend" x="699" y="52"/><use href="#floor" x="735" y="52"/><use href="#cam" x="771" y="52"/><use href="#bulb" x="807" y="52"/><use href="#dnf" x="843" y="52"/><use href="#clap2" x="879" y="52"/>
<path d="M917 60 923 69 917 78 919 69Z" fill="#f0801c" stroke="#f0801c"/>
<use href="#tri" x="91" y="52"/><use href="#tri" x="236" y="52"/><use href="#tri" x="473" y="52"/><use href="#tri" x="509" y="52"/><use href="#tri" x="591" y="52"/><use href="#tri" x="627" y="52"/><use href="#tri" x="663" y="52"/><use href="#tri" x="699" y="52"/><use href="#tri" x="735" y="52"/><use href="#tri" x="771" y="52"/><use href="#tri" x="807" y="52"/><use href="#tri" x="8" y="91"/>

<use href="#hier" x="8" y="91"/><use href="#dimt" x="46" y="91"/><use href="#dn1" x="83" y="91"/><use href="#nl" x="120" y="91"/><use href="#nl2" x="157" y="91"/><use href="#p1" x="195" y="91"/><use href="#p2" x="231" y="91"/><use href="#p3" x="266" y="91"/>
<use href="#g1" x="304" y="91"/><use href="#g2" x="340" y="91"/><use href="#g3" x="376" y="91"/><use href="#g4" x="412" y="91"/><use href="#g5" x="447" y="91"/><use href="#g6" x="484" y="91"/><use href="#g7" x="520" y="91"/><use href="#g8" x="556" y="91"/><use href="#de" x="595" y="91"/><use href="#fx" x="630" y="91"/>
<use href="#o1" x="8" y="129"/><use href="#o2" x="44" y="129"/><use href="#o3" x="80" y="129"/><use href="#o4" x="116" y="129"/><use href="#o5" x="152" y="129"/><use href="#o6" x="188" y="129"/><use href="#o7" x="224" y="129"/><use href="#o8" x="260" y="129"/><use href="#o9" x="296" y="129"/><use href="#o9" x="332" y="129"/><use href="#o10" x="368" y="129"/><use href="#o11" x="404" y="129"/><use href="#o12" x="440" y="129"/><use href="#o13" x="476" y="129"/><use href="#o14" x="512" y="129"/><use href="#o15" x="548" y="129"/>

<!-- Left toolbars -->
<rect x="4" y="168" width="30" height="4" fill="url(#gp)"/><rect x="44" y="168" width="28" height="4" fill="url(#gp)"/>
<g fill="#5f5f5f" stroke="#393939">
<rect x="1" y="177" width="34" height="35" rx="3"/><rect x="1" y="223" width="34" height="106" rx="3"/><rect x="1" y="333" width="34" height="106" rx="3"/><rect x="1" y="451" width="34" height="106" rx="3"/><rect x="1" y="569" width="34" height="34" rx="3"/><rect x="1" y="615" width="34" height="70" rx="3"/>
<rect x="40" y="177" width="34" height="34" rx="3"/><rect x="40" y="213" width="34" height="142" rx="3"/><rect x="40" y="359" width="34" height="214" rx="3"/><rect x="40" y="577" width="34" height="106" rx="3"/><rect x="40" y="687" width="34" height="106" rx="3"/><rect x="40" y="797" width="34" height="38" rx="3"/>
</g>
<path d="M2 258.500H34M2 294.500H34M2 368.500H34M2 404.500H34M2 486.500H34M2 522.500H34M2 650.500H34M41 248.500H73M41 284.500H73M41 320.500H73M41 395.500H73M41 431.500H73M41 467.500H73M41 503.500H73M41 538.500H73M41 612.500H73M41 648.500H73M41 722.500H73M41 757.500H73" stroke="#4c4c4c"/>
<rect x="1" y="368" width="34" height="35" fill="#8aa6cb"/><rect x="1" y="486" width="34" height="71" fill="#8aa6cb"/><rect x="1" y="569" width="34" height="34" fill="#8aa6cb"/><rect x="1" y="615" width="34" height="35" fill="#8aa6cb"/>
<path d="M2 522.500H34" stroke="#6e85a5"/>
<use href="#d7" x="0" y="177"/>
<use href="#ic1" x="0" y="223"/><use href="#ic2" x="0" y="258"/><use href="#ic3" x="0" y="294"/><use href="#ic4" x="0" y="333"/><use href="#ic5" x="0" y="368"/><use href="#ic6" x="0" y="404"/><use href="#axis" x="0" y="451"/><use href="#mouse" x="0" y="486"/><use href="#sic" x="0" y="522"/><use href="#mag" x="0" y="569"/><use href="#gridb" x="0" y="615"/><rect x="24" y="636" width="10" height="9" fill="#111"/><use href="#gridb" x="0" y="651"/><path d="M21 671C16 676 16 680 21 683M29 671C34 676 34 680 29 683" fill="none" stroke="#f08a10" stroke-width="3"/>
<use href="#tri" x="0" y="223"/><use href="#tri" x="0" y="522"/><use href="#tri" x="0" y="569"/><use href="#tri" x="0" y="651"/>
<use href="#qm" x="40" y="177"/><use href="#cur2" x="40" y="213"/><use href="#sel1" x="40" y="248"/><use href="#sel2" x="40" y="284"/><use href="#sel3" x="40" y="320"/>
<use href="#dst" x="39" y="359"/><use href="#d8" x="39" y="395"/><use href="#sw1" x="40" y="431"/><use href="#sw2" x="40" y="467"/><use href="#d1" x="39" y="503"/><use href="#d7" x="39" y="538"/>
<use href="#d6" x="39" y="577"/><use href="#d6" x="39" y="612"/><use href="#d8" x="39" y="650"/><use href="#d6" x="39" y="687"/><use href="#d6" x="39" y="722"/><path d="M66 743V755M62 747 66 742 70 747M64 748V756H68V748" fill="none" stroke="#3e3e3e" stroke-width="1.200"/><use href="#d6" x="39" y="757"/><path d="M64 777V785H61L66 791 71 785H68V777Z" fill="none" stroke="#3e3e3e" stroke-width="1.200"/><use href="#d6" x="39" y="797"/><use href="#dlens" x="39" y="797"/>

<!-- Viewport -->
<rect x="79" y="168" width="748" height="24" fill="#4a4a4a" stroke="#3a3a3a"/>
<rect x="86" y="172" width="10" height="12" fill="url(#gp)"/>
<text x="105" y="184">查看</text><text x="141" y="184">摄像机</text><text x="190" y="184">显示</text><text x="225" y="184" class="y">选项</text><text x="263" y="184">过滤</text><text x="298" y="184">面板</text><text x="332" y="184">ProRender</text>
<rect x="79" y="192" width="748" height="643" fill="url(#vp)"/>
<rect x="82" y="195" width="40" height="17" fill="#5f5f5f"/><text x="84" y="208" style="fill:#c4c4c4">透视视图</text>
<g stroke="#5a5a5a" fill="none"><path d="M79 400H111M79 410H111M79 425H111M79 445H111M79 470H111M79 500H111M79 530H111M79 565H111M79 598H111M79 640H111M79 595 111 580M79 500 111 490M79 445 111 435M79 665 111 648"/><path d="M817 430H827M817 445H827M817 460H827M817 490H827M817 520H827M817 560H827M817 600H827M817 640H827M817 690H827"/><path d="M135 746 80 830M453 746V834M773 746 827 825M80 786H827"/></g>
<path d="M817 525H832" stroke="#8c3030"/>
<path d="M79.500 834.500H826.500V192" fill="none" stroke="#c4c4c4"/>
<path d="M117 797V780" stroke="#2a8c40"/><path d="M117 797H135" stroke="#c83030"/><path d="M117 797 117 787" stroke="#3050d0"/>
<text x="113" y="774" style="fill:#38b050;font-size:11px">Y</text><text x="113" y="791" style="fill:#3050d0;font-size:11px">Z</text><text x="139" y="801" style="fill:#c83030;font-size:11px">X</text>
<rect x="717" y="813" width="106" height="18" rx="2" fill="#525252"/><text x="720" y="826" class="m">网格间距 : 100 cm</text>

<!-- Right vertical tools -->
<rect x="836" y="168" width="26" height="4" fill="url(#gp)"/><rect x="875" y="168" width="40" height="4" fill="url(#gp)"/>
<g fill="#5f5f5f" stroke="#393939">
<rect x="832" y="177" width="34" height="70" rx="3"/><rect x="832" y="251" width="34" height="142" rx="3"/><rect x="832" y="397" width="34" height="106" rx="3"/><rect x="832" y="507" width="34" height="70" rx="3"/><rect x="832" y="581" width="34" height="142" rx="3"/>
<rect x="871" y="177" width="51" height="142" rx="3"/><rect x="871" y="323" width="51" height="140" rx="3"/><rect x="871" y="468" width="51" height="107" rx="3"/><rect x="871" y="579" width="51" height="142" rx="3"/><rect x="871" y="726" width="51" height="108" rx="3"/>
</g>
<path d="M833 212.500H865M833 287.500H865M833 358.500H865M833 432.500H865M833 468.500H865M833 542.500H865M833 616.500H865M833 652.500H865M833 688.500H865M872 212.500H921M872 248.500H921M872 283.500H921M872 359.500H921M872 395.500H921M872 431.500H921M872 504.500H921M872 540.500H921M872 614.500H921M872 650.500H921M872 686.500H921M872 762.500H921M872 798.500H921" stroke="#4c4c4c"/>
<rect x="833" y="322" width="33" height="36" fill="#7a7a3e"/>
<use href="#dcd" x="831" y="177"/>
<path d="M852 224 867 215 860 213 848 222 841 230 843 237Z" fill="#111"/><path d="M844 226 858 236 852 246 836 240Z" fill="#f8a030" stroke="#222"/><path d="M842 232C838 226 844 222 850 220L856 224 846 232Z" fill="#f8a030" stroke="#222"/>
<use href="#d5" x="831" y="251"/><use href="#dk" x="831" y="287"/>
<path d="M849 324 863 332V348L849 356 835 348V332Z" fill="none" stroke="#5c5c2a" stroke-width="1.500"/><path d="M840 333H858L849 350Z" fill="none" stroke="#5c5c2a" stroke-width="2"/><path d="M845 337H853L849 345Z" fill="none" stroke="#5c5c2a"/>
<use href="#dbk" x="831" y="358"/><use href="#d2" x="831" y="397"/><use href="#darc" x="831" y="432"/><use href="#darr" x="831" y="469"/>
<use href="#dcut" x="831" y="507"/><use href="#dgp" x="831" y="542"/><use href="#d2" x="831" y="581"/><use href="#d1" x="831" y="616"/><use href="#d9" x="831" y="652"/><use href="#d1" x="831" y="688"/>
<use href="#dblk" x="873" y="178"/><use href="#dbrk" x="872" y="213"/><use href="#d2" x="874" y="248"/><use href="#dgr" x="913" y="266"/><use href="#d2" x="874" y="284"/>
<use href="#d3a" x="876" y="324"/>
<path d="M886 363H904L899 373H881ZM884 376H902L895 387H877Z" fill="#666" stroke="#222"/><path d="M882 385 900 378" stroke="#f0a020" stroke-width="2"/><circle cx="883" cy="372" r="2" fill="#f0a020"/><circle cx="902" cy="365" r="2" fill="#f0a020"/><path d="M875 367H881V375H885L878 384 871 375H875Z" fill="#eee" stroke="#222"/>
<use href="#d3b" x="876" y="396"/><use href="#d3c" x="876" y="432"/><use href="#d3" x="876" y="469"/><use href="#dgr" x="913" y="486"/><use href="#d3c" x="876" y="505"/><use href="#d3b" x="876" y="541"/><use href="#dgr" x="913" y="558"/>
<g fill="#666" stroke="#4c4c4c"><circle cx="879" cy="585" r="3"/><circle cx="889" cy="585" r="3"/><circle cx="899" cy="585" r="3"/><circle cx="879" cy="595" r="3"/><circle cx="889" cy="595" r="3"/><circle cx="899" cy="595" r="3"/></g><path d="M877 601 889 611M889 601 877 611M891 602H905V606H891ZM891 608H905V612H891Z" fill="none" stroke="#3e3e3e" stroke-width="1.200"/>
<path d="M886 617H904L899 627H881ZM884 630H902L895 641H877Z" fill="#666" stroke="#222"/><path d="M890 618 898 627M882 639 900 632" stroke="#f0a020" stroke-width="2"/><path d="M875 621H881V629H885L878 638 871 629H875Z" fill="#eee" stroke="#222"/>
<use href="#d1" x="879" y="652"/><use href="#d8" x="879" y="688"/>
<use href="#drec" x="877" y="728"/><use href="#dgr" x="913" y="746"/>
<use href="#axis" x="875" y="764"/><rect x="891" y="768" width="16" height="10" fill="#555" stroke="#eee"/><text x="893" y="777" style="font-size:10px;font-weight:bold;fill:#eee">=1</text>
<circle cx="913" cy="779" r="4" fill="none" stroke="#111" stroke-width="3"/><circle cx="913" cy="779" r="6" fill="none" stroke="#111" stroke-width="1.500" stroke-dasharray="2 2"/>
<path d="M884 812 893 816V826L884 831 875 826V816Z" fill="#f08a10" stroke="#333"/><circle cx="896" cy="807" r="5" fill="none" stroke="#eee" stroke-width="3"/><circle cx="896" cy="807" r="7.500" fill="none" stroke="#eee" stroke-width="2" stroke-dasharray="3 2"/>

<!-- XPresso window -->
<rect x="111" y="179" width="706" height="567" fill="#555"/>
<rect x="111" y="179" width="706" height="30" fill="#fff"/>
<circle cx="127" cy="194" r="7.500" fill="#c8ccd8"/><circle cx="127" cy="194" r="4.500" fill="#1c2a78"/>
<text x="140" y="199" style="font-size:13px;fill:#222">XPresso 编辑器</text>
<path d="M698 193H708" stroke="#111" stroke-width="1.200"/><rect x="743.500" y="188.500" width="9" height="9" fill="none" stroke="#111" stroke-width="1.200"/><path d="M789 188 799 198M799 188 789 198" stroke="#111"/>
<rect x="111" y="209" width="706" height="23" fill="#5c5c5c"/><path d="M111 232.500H817" stroke="#3c3c3c"/>
<rect x="116" y="215" width="11" height="11" fill="url(#gp)"/>
<text x="137" y="225" class="m">文件</text><text x="173" y="225" class="m">编辑</text><text x="209" y="225" class="m">布局</text><text x="245" y="225" class="m">视图</text><text x="281" y="225" class="m">自定义</text><text x="328" y="225" class="m">计算</text>
<rect x="111" y="233" width="152" height="24" fill="#474747"/>
<path d="M112 257V236H167V257Z" fill="#454545" stroke="#3c3c3c"/><path d="M169 257V234H234V257Z" fill="#5e5e5e" stroke="#3e3e3e"/>
<text x="117" y="250" class="d">X-管理器</text><text x="174" y="250" class="o">XPresso 池</text>
<rect x="112" y="257" width="148" height="26" fill="#474747"/><path d="M112 283H260" stroke="#333" stroke-width="1.500"/>
<rect x="118" y="264" width="11" height="11" fill="url(#gp)"/><text x="138" y="274" class="m">编辑</text>
<circle cx="249" cy="267" r="4" fill="none" stroke="#222" stroke-width="1.300"/><path d="M252 270 256 276" stroke="#222" stroke-width="1.500"/>
<rect x="112" y="284" width="148" height="461" fill="#474747" stroke="#383838"/>
<path d="M125.500 284V330M126 294H134M126 314H134M126 334H134" stroke="#777"/><path d="M124 291 128 294 124 297ZM124 331 128 334 124 337Z" fill="#222"/>
<text x="134" y="298" class="m">系统运算器</text><text x="134" y="318" class="m">系统预置</text><text x="134" y="338" class="m">System Presets</text>
<use href="#sph" x="226" y="291"/><use href="#sph" x="226" y="311"/><use href="#sph" x="226" y="331"/>

<rect x="263" y="237" width="554" height="491" fill="#606060"/>
<rect x="263" y="237" width="11" height="18" fill="#3a70b0"/><rect x="805" y="237" width="11" height="18" fill="#cb6464"/>
<text x="523" y="250" text-anchor="middle" class="w">群组</text>
<path d="M783 240V252M777 246H789M780 243 783 239 786 243M780 249 783 253 786 249M780 243 776 246 780 249M786 243 790 246 786 249" stroke="#111" stroke-width="2" fill="#111"/>
<path d="M797 241V255M793 245 797 240 801 245M793 251 797 256 801 251" stroke="#111" stroke-width="2" fill="#111"/>
<rect x="274" y="255" width="531" height="471" fill="url(#grid)"/>
<path d="M263 727H817" stroke="#3a3a3a" stroke-width="2"/>
<rect x="260" y="728" width="557" height="18" fill="#505050"/>
<text x="270" y="742" class="m">偏移:实数(实数)</text>
<path d="M111 746.500H817" stroke="#3c3c3c"/>

<!-- Node 对象 -->
<rect x="334.500" y="388.500" width="116" height="84" rx="4" fill="#474747" stroke="#333"/>
<rect x="346" y="389" width="93" height="19" fill="#5a5a5a"/><rect x="335" y="389" width="11" height="19" fill="#3a70b0"/><rect x="439" y="389" width="11" height="19" fill="#cb6464"/>
<rect x="335" y="408" width="11" height="64" fill="#585858"/><rect x="439" y="408" width="11" height="64" fill="#585858"/>
<text x="392" y="402" text-anchor="middle" class="w">对象</text>
<text x="436" y="429" text-anchor="end" style="fill:#bbb">偏移</text><text x="436" y="455" text-anchor="end" style="fill:#bbb">挤出</text>
<use href="#port" x="444" y="425"/><use href="#port" x="444" y="451"/>
<path d="M444 425 600 344" stroke="#28b428" stroke-width="1.200"/>

<!-- Hidden nodes -->
<rect x="594.500" y="333.500" width="56" height="38" rx="4" fill="#585858" stroke="#333"/><rect x="595" y="334" width="11" height="19" fill="#3a70b0"/><rect x="638" y="334" width="12" height="19" fill="#cb6464"/><rect x="606" y="334" width="32" height="19" fill="#5a5a5a"/><text x="621" y="348" text-anchor="middle" class="w">倒角</text>
<path d="M610 395H597Q593.500 395 593.500 399V428Q593.500 432 597 432H610Z" fill="#585858" stroke="#333"/><rect x="594" y="395" width="14" height="19" fill="#3a70b0"/>
<path d="M610 483H591Q587.500 483 587.500 487V516Q587.500 520 591 520H610Z" fill="#585858" stroke="#f0a020"/><rect x="588" y="484" width="14" height="19" fill="#3a70b0"/>

<!-- Context menu -->
<rect x="600.500" y="343.500" width="86" height="258" rx="2" fill="#474747" stroke="#333"/>
<g><text x="609" y="362" class="d">全局矩阵</text><text x="609" y="385">历史级别</text><text x="609" y="408">坐标</text><text x="609" y="431">基本属性</text><text x="609" y="454">外形</text><text x="609" y="477">多边形挤出</text><text x="609" y="500" class="d">对象</text><text x="609" y="523" class="d">局部矩阵</text><text x="609" y="546">开启</text><text x="609" y="569">拓扑</text></g>
<rect x="603" y="576" width="78" height="24" fill="#8f8f8f"/><text x="609" y="592" class="k">选项</text>
<g fill="#a6a6a6"><path d="M673 401 677 404 673 407ZM673 424 677 427 673 430ZM673 447 677 450 673 453ZM673 470 677 473 673 476ZM673 562 677 565 673 568Z"/></g><path d="M673 585 677 588 673 591Z" fill="#111"/>
<rect x="681.500" y="573.500" width="62" height="235" rx="2" fill="#474747" stroke="#333"/>
<rect x="683" y="600" width="58" height="22" fill="#8f8f8f"/>
<text x="689" y="592">倒角模式</text><text x="689" y="615" class="k">偏移</text><text x="689" y="638">偏移模式</text><text x="689" y="662">构成模式</text><text x="689" y="684">深度</text><text x="689" y="708">用户角度</text><text x="689" y="730">细分</text><text x="689" y="754">角度阈值</text><text x="689" y="776">选择</text><text x="689" y="800">限制</text>
<rect x="671" y="601" width="79" height="19" fill="none" stroke="#f00" stroke-width="2"/>

<!-- Timeline -->
<rect x="40" y="843" width="5" height="24" fill="url(#gp)"/>
<rect x="48" y="840" width="802" height="22" fill="#383838" stroke="#2f2f2f"/>
<rect x="50" y="841" width="9" height="17" fill="#45d880"/>
<text x="63" y="851" text-anchor="middle" style="fill:#45d880">0</text>
<g><text x="117" y="851" text-anchor="middle" style="fill:#bbb">20</text><text x="180" y="851" text-anchor="middle" style="fill:#bbb">40</text><text x="243" y="851" text-anchor="middle" style="fill:#bbb">60</text><text x="306" y="851" text-anchor="middle" style="fill:#bbb">80</text><text x="369" y="851" text-anchor="middle" style="fill:#bbb">100</text><text x="433" y="851" text-anchor="middle" style="fill:#bbb">120</text><text x="496" y="851" text-anchor="middle" style="fill:#bbb">140</text><text x="559" y="851" text-anchor="middle" style="fill:#bbb">160</text><text x="622" y="851" text-anchor="middle" style="fill:#bbb">180</text><text x="685" y="851" text-anchor="middle" style="fill:#bbb">200</text><text x="749" y="851" text-anchor="middle" style="fill:#bbb">220</text><text x="812" y="851" text-anchor="middle" style="fill:#bbb">240</text></g>
<path d="M52 859H848" stroke="#999" stroke-dasharray="1 5"/>
<path d="M53 843V861M211 843V861M369 843V861M527 843V861M685 843V861M843 843V861" stroke="#777"/>
<rect x="856" y="841" width="67" height="20" rx="2" fill="#3f3f3f"/><text x="861" y="855">0 F</text><use href="#spin" x="914" y="846"/>

<!-- Transport -->
<rect x="40" y="870" width="5" height="24" fill="url(#gp)"/>
<rect x="48" y="870" width="65" height="20" rx="2" fill="#3f3f3f"/><text x="53" y="884">0 F</text><use href="#spin" x="106" y="875"/>
<rect x="120" y="870" width="222" height="20" rx="4" fill="url(#sl)" stroke="#3c3c3c"/><text x="137" y="883" class="m">0 F</text><text x="297" y="883" style="fill:#444">250 F</text><path d="M133 875 127 880 133 885ZM329 875 335 880 329 885Z" fill="#bbb"/>
<rect x="349" y="870" width="64" height="20" rx="2" fill="#3f3f3f"/><text x="354" y="884">250 F</text><use href="#spin" x="406" y="875"/>
<g fill="#5f5f5f" stroke="#393939"><rect x="426" y="867" width="26" height="26" rx="3"/><rect x="464" y="867" width="138" height="26" rx="3"/><rect x="613" y="867" width="27" height="26" rx="3"/><rect x="652" y="867" width="83" height="26" rx="3"/><rect x="746" y="867" width="137" height="26" rx="3"/><rect x="896" y="867" width="27" height="26" rx="3"/></g>
<rect x="746" y="868" width="110" height="24" fill="#8aa6cb"/><rect x="896" y="868" width="27" height="24" fill="#8aa6cb"/>
<path d="M491.500 868V892M518.500 868V892M546.500 868V892M574.500 868V892M679.500 868V892M707.500 868V892M774.500 868V892M801.500 868V892M829.500 868V892M856.500 868V892" stroke="#4c4c4c"/>
<path d="M433 872V888H436V872ZM436 880 445 872V888Z" fill="#111"/><path d="M486 872C477 872 472 876 472 880S477 888 486 888V884C480 884 477 882 477 880S480 876 486 876Z" fill="#111"/>
<path d="M510 872 500 880 510 888V884L505 880 510 876ZM514 872V888" fill="#111" stroke="#111"/><path d="M526 871 541 880 526 889Z" fill="#3ce08a" stroke="#111"/>
<path d="M555 872 565 880 555 888ZM555 872V888" fill="#111" stroke="#111"/><path d="M584 872C593 872 594 876 594 880S593 888 584 888V884C589 884 590 882 590 880S589 876 584 876Z" fill="#111"/>
<path d="M637 872V888H634V872ZM634 880 625 872V888ZM625 880 618 873V887Z" fill="#111"/>
<g fill="#d64a4a" stroke="#222"><circle cx="665" cy="880" r="9.500"/><circle cx="693" cy="880" r="9.500"/><circle cx="721" cy="880" r="9.500"/></g>
<path d="M660 886 670 874" stroke="#111" stroke-width="2.500"/><path d="M689 873C686 877 686 883 689 887M697 873C700 877 700 883 697 887" fill="none" stroke="#111" stroke-width="2"/><text x="721" y="885" text-anchor="middle" class="k" style="font-size:14px;font-weight:bold">?</text>
<g transform="translate(759 867) scale(.72)"><use href="#mv"/></g><g transform="translate(785 867) scale(.75)"><use href="#scl"/></g><g transform="translate(803 867) scale(.75)"><use href="#rot"/></g>
<circle cx="842" cy="880" r="10.500" fill="none" stroke="#e88a14" stroke-width="2"/><text x="842" y="885" text-anchor="middle" class="k" style="font-size:14px;font-weight:bold">P</text>
<g fill="#f0a020"><circle cx="864" cy="873" r="2"/><circle cx="870" cy="873" r="2"/><circle cx="876" cy="873" r="2"/><circle cx="864" cy="880" r="2"/><circle cx="870" cy="880" r="2"/></g><g fill="#111"><circle cx="876" cy="880" r="2"/><circle cx="864" cy="887" r="2"/><circle cx="870" cy="887" r="2"/><circle cx="876" cy="887" r="2"/></g>
<rect x="903" y="870" width="13" height="20" fill="#e8a030" stroke="#222"/><path d="M903 876H916M903 884H916" stroke="#222" stroke-width="2"/>

<!-- Materials -->
<rect x="39.500" y="897.500" width="580" height="118" fill="#474747" stroke="#333"/><path d="M40 922.500H620" stroke="#333"/>
<rect x="46" y="904" width="11" height="12" fill="url(#gp)"/>
<text x="66" y="914" class="y">创建</text><text x="102" y="914">编辑</text><text x="138" y="914">功能</text><text x="173" y="914">纹理</text>
<rect x="41.500" y="924.500" width="43" height="61" fill="#5d5d5d" stroke="#333"/><rect x="43" y="926" width="41" height="43" fill="#7a7a7a"/><path d="M43 955 52 969H43ZM84 955 74 969H84ZM74 926H84V936H74Z" fill="#c8c8c8"/><path d="M50 965H76L84 969H43Z" fill="#333"/><ellipse cx="63" cy="947" rx="20" ry="20" fill="url(#sw)"/>
<text x="43" y="981" style="font-size:12px;fill:#c4ccd8">Cyc Wh</text>
<g transform="translate(16 1013) rotate(-90)"><text x="0" y="0" style="font-size:18px;font-weight:bold;font-style:italic;fill:#7c7c7c" textLength="59" lengthAdjust="spacingAndGlyphs">MAXON</text></g>
<g transform="translate(34 1013) rotate(-90)"><text x="0" y="0" style="font-size:17px;fill:#7c7c7c" textLength="81" lengthAdjust="spacingAndGlyphs">CINEMA 4D</text></g>

<!-- Coordinates -->
<rect x="623.500" y="897.500" width="296" height="118" fill="#474747" stroke="#333"/><path d="M624 917.500H920" stroke="#333"/>
<rect x="629" y="903" width="11" height="12" fill="url(#gp)"/>
<text x="648" y="912" class="d">--</text><text x="741" y="912" class="d">--</text><text x="833" y="912" class="d">--</text>
<g fill="#4b4b4b"><rect x="638" y="924" width="84" height="19"/><rect x="736" y="924" width="84" height="19"/><rect x="836" y="924" width="82" height="19"/><rect x="638" y="947" width="84" height="19"/><rect x="736" y="947" width="84" height="19"/><rect x="836" y="947" width="82" height="19"/><rect x="638" y="970" width="84" height="19"/><rect x="736" y="970" width="84" height="19"/><rect x="836" y="970" width="82" height="19"/></g>
<g><text x="627" y="938" class="m">X</text><text x="725" y="938" class="m">X</text><text x="823" y="938" class="m">H</text><text x="627" y="961" class="m">Y</text><text x="725" y="961" class="m">Y</text><text x="823" y="961" class="m">P</text><text x="627" y="984" class="m">Z</text><text x="725" y="984" class="m">Z</text><text x="823" y="984" class="m">B</text></g>
<g><text x="642" y="938" class="dim">0 cm</text><text x="740" y="938" class="dim">0 cm</text><text x="840" y="938" class="dim">0 °</text><text x="642" y="961" class="dim">0 cm</text><text x="740" y="961" class="dim">0 cm</text><text x="840" y="961" class="dim">0 °</text><text x="642" y="984" class="dim">0 cm</text><text x="740" y="984" class="dim">0 cm</text><text x="840" y="984" class="dim">0 °</text></g>
<use href="#spin" x="715" y="928"/><use href="#spin" x="813" y="928"/><use href="#spin" x="911" y="928"/><use href="#spin" x="715" y="951"/><use href="#spin" x="813" y="951"/><use href="#spin" x="911" y="951"/><use href="#spin" x="715" y="974"/><use href="#spin" x="813" y="974"/><use href="#spin" x="911" y="974"/>
<rect x="638" y="996" width="84" height="18" rx="3" fill="url(#bt)" stroke="#3a3a3a"/><text x="645" y="1009" style="fill:#d0d0d0">对象 (相对)</text><path d="M709 1003H717L713 1008Z" fill="#ccc"/>
<rect x="736" y="996" width="84" height="18" rx="3" fill="#545454" stroke="#3f3f3f"/><text x="743" y="1009" class="d">绝对尺寸</text><path d="M807 1003H815L811 1008Z" fill="#777"/>
<rect x="836" y="996" width="82" height="18" rx="7" fill="url(#bt)" stroke="#3a3a3a"/><text x="877" y="1010" text-anchor="middle" style="fill:#d0d0d0">应用</text>

<!-- Status bar -->
<path d="M0 1020.500H926" stroke="#333"/><rect x="4" y="1024" width="11" height="13" fill="url(#gp)"/>
<text x="26" y="1034">Octane:</text><path d="M79.500 1022V1040" stroke="#333"/><text x="83" y="1034">偏移:实数(实数)</text>

<!-- Object manager -->
<rect x="926" y="52" width="603" height="493" fill="#474747" stroke="#363636"/>
<rect x="926.500" y="52.500" width="602" height="23" fill="#484848" stroke="#363636"/>
<rect x="932" y="58" width="11" height="11" fill="url(#gp)"/>
<text x="953" y="69">文件</text><text x="989" y="69">编辑</text><text x="1025" y="69">查看</text><text x="1061" y="69">对象</text><text x="1097" y="69" class="y">标签</text><text x="1133" y="69">书签</text>
<circle cx="1462" cy="60" r="3.500" fill="none" stroke="#222" stroke-width="1.300"/><path d="M1464 63 1468 70" stroke="#222" stroke-width="1.300"/>
<path d="M1482 57 1488 63H1485V70H1479V63H1476Z" fill="none" stroke="#111" stroke-width="1.500"/><ellipse cx="1501" cy="64" rx="5" ry="3.500" fill="none" stroke="#777"/><rect x="1514" y="57" width="10" height="13" fill="#444" stroke="#222"/><path d="M1519 60V67M1516 63.500H1522" stroke="#ddd"/>
<g fill="#4b4b4b"><rect x="927" y="97" width="600" height="20"/><rect x="927" y="137" width="600" height="20"/><rect x="927" y="177" width="600" height="20"/><rect x="927" y="217" width="600" height="20"/><rect x="927" y="257" width="600" height="20"/><rect x="927" y="297" width="600" height="20"/><rect x="927" y="337" width="600" height="20"/></g>
<path d="M1074.500 77V545M1114.500 77V545" stroke="#333"/>
<g stroke="#9a9a9a" fill="none"><path d="M935 85V92M949 98V104M962 118V124M974 138V145M986 158V164M997 178V185M936 95V212M950 208V345M936 212H942M950 228H956M950 248H956M950 268H956M950 288H956M950 308H956M950 348V340M950 348H956"/><path d="M960 128H966M971 168H977M983 208H989M983 188V208"/><path d="M936 87H944M947 107H954M958 147H966M969 187H976"/></g>
<use href="#exp" x="932" y="83"/><use href="#exp" x="943" y="103"/><use href="#exp" x="954" y="144"/><use href="#exp" x="965" y="184"/><use href="#exp" x="932" y="244"/>
<use href="#nul" x="953" y="79"/><use href="#nul" x="964" y="99"/><use href="#nul" x="975" y="139"/><use href="#nul" x="986" y="179"/><use href="#nul" x="964" y="259"/>
<use href="#bev" x="967" y="119"/><use href="#bev" x="978" y="159"/><use href="#bev" x="990" y="199"/>
<path d="M997 213 1003 226H991Z" fill="#5aa8e0" stroke="#ddd"/>
<circle cx="950" cy="240" r="3" fill="#111"/><circle cx="947" cy="250" r="3" fill="#ccc" stroke="#111"/><circle cx="955" cy="250" r="3" fill="#ccc" stroke="#111"/>
<use href="#soft" x="957" y="281"/><rect x="958" y="288" width="10" height="11" rx="2" fill="#f07000"/>
<use href="#soft" x="957" y="301"/><rect x="958" y="308" width="10" height="11" rx="2" fill="#00d020"/>
<use href="#soft" x="957" y="321"/><rect x="958" y="328" width="10" height="11" rx="2" fill="#e000c8"/>
<circle cx="958" cy="344" r="3" fill="#ccc" stroke="#111"/><circle cx="964" cy="344" r="3" fill="#ccc" stroke="#111"/><rect x="956" y="349" width="10" height="7" fill="#111"/>
<text x="963" y="91" class="od">对象</text><text x="974" y="111" class="od">空白</text><text x="985" y="132" class="o">倒角</text><text x="985" y="152" class="od">空白</text><text x="996" y="172" class="o">倒角</text><text x="996" y="192" class="od">空白</text><text x="1008" y="212" class="o">倒角</text><text x="1008" y="232" style="fill:#b4b4b4">立方体</text>
<text x="963" y="252" class="m">Neon Tokyo</text><text x="974" y="272" class="m">READ ME</text><text x="974" y="292" class="m">Left Softbox</text><text x="974" y="312" class="m">Right Softbox</text><text x="974" y="332" class="m" textLength="96" lengthAdjust="spacingAndGlyphs">Overhead Softbox</text><text x="974" y="352" class="m">Camera</text>
<use href="#lay" x="1078" y="81"/><use href="#lay" x="1078" y="101"/><use href="#lay" x="1078" y="121"/><use href="#lay" x="1078" y="141"/><use href="#lay" x="1078" y="161"/><use href="#lay" x="1078" y="181"/><use href="#lay" x="1078" y="201"/><use href="#lay" x="1078" y="221"/><use href="#lay" x="1078" y="241"/><use href="#lay" x="1078" y="261"/><use href="#lay" x="1078" y="281"/><use href="#lay" x="1078" y="301"/><use href="#lay" x="1078" y="321"/><use href="#lay" x="1078" y="341"/>
<use href="#dts" x="1094" y="81"/><use href="#dts" x="1094" y="101"/><use href="#dts" x="1094" y="121"/><use href="#dts" x="1094" y="141"/><use href="#dts" x="1094" y="161"/><use href="#dts" x="1094" y="181"/><use href="#dts" x="1094" y="201"/><use href="#dts" x="1094" y="221"/><use href="#dts" x="1094" y="261"/><use href="#dts" x="1094" y="281"/><use href="#dts" x="1094" y="301"/><use href="#dts" x="1094" y="321"/><use href="#dts" x="1094" y="341"/>
<circle cx="1097" cy="244" r="2.500" fill="#d84848"/><circle cx="1097" cy="251" r="2.500" fill="#d84848"/>
<use href="#chk" x="1103" y="123"/><use href="#chk" x="1103" y="163"/><use href="#chk" x="1103" y="203"/><use href="#chk" x="1103" y="244"/><use href="#chk" x="1103" y="284"/><use href="#chk" x="1103" y="304"/><use href="#chk" x="1103" y="324"/>
<rect x="1116" y="79" width="16" height="16" fill="#3f3f3f" stroke="#f0a020"/><path d="M1120 87H1123M1125 83H1128M1125 91H1128" stroke="#6e90e0" stroke-width="2.500"/>
<circle cx="1120" cy="224" r="3.500" fill="#b87020"/><circle cx="1126" cy="232" r="3.500" fill="#b87020"/><rect x="1137" y="221" width="13" height="14" fill="#eee" stroke="#7a4a10"/><path d="M1139 223H1142V226H1139ZM1145 223H1148V226H1145ZM1142 226H1145V229H1142ZM1139 229H1142V232H1139ZM1145 229H1148V232H1145Z" fill="#111"/>
<rect x="1115" y="238" width="18" height="18" fill="#5e5e5e"/><circle cx="1124" cy="247" r="9" fill="url(#sw)"/>
<rect x="1116" y="338" width="14" height="16" rx="6" fill="#c47a26"/><path d="M1118 340 1128 352" stroke="#222" stroke-width="1.500"/><rect x="1136" y="338" width="16" height="16" rx="3" fill="#2a2a2a"/><path d="M1139 343H1141L1142 341H1146L1147 343H1149V351H1139Z" fill="#e83818"/>
<path d="M1107 342H1113M1107 352H1113" stroke="#aaa" stroke-dasharray="2 2"/>
<g fill="none" stroke="#f00" stroke-width="2"><rect x="951" y="114" width="81" height="22"/><rect x="962" y="159" width="72" height="25"/><rect x="977" y="199" width="76" height="21"/></g>

<!-- Side tabs -->
<rect x="1530" y="52" width="21" height="32" rx="3" fill="#5f5f5f"/><path d="M1530 86H1551V118H1530ZM1530 121H1551V184H1530ZM1530 187H1551V220H1530Z" fill="#3f3f3f"/>
<text transform="translate(1535 60) rotate(90)" class="o" style="font-size:11px">对象</text><text transform="translate(1535 93) rotate(90)" style="font-size:11px;fill:#8a8a8a">场次</text><text transform="translate(1535 127) rotate(90)" style="font-size:11px;fill:#8a8a8a">内容浏览器</text><text transform="translate(1535 194) rotate(90)" style="font-size:11px;fill:#8a8a8a">构造</text>

<!-- Attribute panel -->
<rect x="1557" y="52" width="363" height="20" fill="#333"/><rect x="1561" y="56" width="7" height="11" fill="#888"/>
<text x="1580" y="66" style="fill:#c0c0c0">属性</text>
<path d="M1557 72.500H1920M1557 96.500H1920" stroke="#333"/>
<rect x="1562" y="78" width="11" height="11" fill="url(#gp)"/>
<text x="1583" y="88">模式</text><text x="1619" y="88">编辑</text><text x="1655" y="88">用户数据</text>
<path d="M1774 84 1790 78V90Z" fill="#1e1e1e"/><path d="M1793 90V78L1806 84Z" fill="#5a5a5a"/><path d="M1825 78 1831 91H1819Z" fill="#1e1e1e"/><circle cx="1850" cy="81" r="3.500" fill="none" stroke="#222" stroke-width="1.300"/><path d="M1852 84 1855 90" stroke="#222" stroke-width="1.300"/><rect x="1869" y="84" width="9" height="8" fill="none" stroke="#222" stroke-width="1.300"/><path d="M1870 84V80C1870 76 1877 76 1877 79" fill="none" stroke="#222"/><circle cx="1891" cy="84" r="6" fill="none" stroke="#222" stroke-width="1.300"/><circle cx="1891" cy="84" r="2.500" fill="none" stroke="#222"/><rect x="1904" y="77" width="10" height="13" fill="#444" stroke="#222"/><path d="M1909 80V87M1906 83.500H1912" stroke="#ddd"/>
<circle cx="1566" cy="114" r="5" fill="#eee" stroke="#222"/><circle cx="1566" cy="114" r="2" fill="#333"/><circle cx="1574" cy="105" r="3.500" fill="#222"/><circle cx="1574" cy="105" r="5" fill="none" stroke="#222" stroke-width="1.500" stroke-dasharray="2 2"/><circle cx="1566" cy="114" r="6.500" fill="none" stroke="#ddd" stroke-width="2" stroke-dasharray="2 2"/>
<text x="1585" y="115" style="fill:#b4b4b4">对象运算器 [对象]</text>
<rect x="1560" y="124" width="29" height="19" rx="3" fill="#666"/><rect x="1589" y="124" width="30" height="19" rx="3" fill="#8aa6cb"/><text x="1563" y="138" style="fill:#ddd">基本</text><text x="1592" y="138" class="k">节点</text>
<rect x="1559" y="149" width="361" height="18" fill="#3c3c3c"/><text x="1561" y="163" style="fill:#bbb">节点属性</text>
<g fill="none" stroke="#888" stroke-width="1.800"><circle cx="1568" cy="182" r="5.500"/><circle cx="1568" cy="204" r="5.500"/><circle cx="1568" cy="270" r="5.500"/></g>
<g fill="none" stroke="#666" stroke-width="1.500"><circle cx="1568" cy="224" r="3.500"/><circle cx="1568" cy="247" r="3.500"/><circle cx="1568" cy="293" r="3.500"/></g>
<path d="M1583 178 1586 182 1583 186Z" fill="#888"/>
<text x="1590" y="187">参考</text><text x="1612" y="187" class="d">. .</text><text x="1579" y="209">参考模式</text><text x="1579" y="229" class="d">起始位置</text><text x="1579" y="251" class="d">起始距离</text><text x="1579" y="275">历史深度</text><text x="1579" y="297" class="d">路径</text><text x="1605" y="297" class="d">. . .</text>
<rect x="1628" y="172" width="255" height="20" rx="2" fill="#363636"/><text x="1635" y="187">倒角</text><g transform="translate(1865 174)"><use href="#bev"/></g>
<rect x="1884" y="172" width="10" height="20" rx="2" fill="#6a6a6a"/><path d="M1887 179 1890 182 1887 185Z" fill="#ddd"/><circle cx="1905" cy="182" r="8" fill="#ccc"/><path d="M1901 175 1910 183 1906 184 1908 188 1905 188 1904 185 1901 187Z" fill="#111"/>
<rect x="1628" y="195" width="285" height="18" rx="3" fill="url(#bt)" stroke="#3c3c3c"/><text x="1635" y="208" style="fill:#ddd">绝对参考</text><path d="M1900 201H1908L1904 206Z" fill="#ddd"/>
<rect x="1628" y="216" width="285" height="18" rx="3" fill="#525252"/><text x="1635" y="229" class="d">当前对象</text><path d="M1900 222H1908L1904 227Z" fill="#757575"/>
<rect x="1628" y="238" width="65" height="18" rx="2" fill="#4b4b4b"/><text x="1633" y="251" class="d">1</text><use href="#spin" x="1685" y="241"/>
<rect x="1628" y="261" width="65" height="18" rx="2" fill="#383838"/><text x="1633" y="275">1</text><use href="#spin" x="1685" y="264"/>
<rect x="1628" y="283" width="285" height="19" rx="2" fill="#4b4b4b"/>

<!-- Live Viewer -->
<rect x="926" y="548" width="627" height="20" fill="#333"/><rect x="931" y="552" width="8" height="12" fill="#8a8a8a"/>
<text x="951" y="561" style="font-size:11.500px;fill:#c4c4c4">Live Viewer 3.07-R2</text>
<rect x="926" y="568" width="627" height="444" fill="#454545"/>
<path d="M926 592.500H1553M926 568H1553" stroke="#333"/><path d="M926.500 548V1038M1553.500 548V1038" stroke="#333"/>
<rect x="932" y="574" width="11" height="12" fill="url(#gp)"/>
<text x="953" y="584">File</text><text x="985" y="584">Cloud</text><text x="1030" y="584">Objects</text><text x="1085" y="584">Materials</text><text x="1146" y="584">Compare</text><text x="1207" y="584">Options</text><text x="1264" y="584">Help</text><text x="1302" y="584">Gui</text>
<path d="M1268.500 593V633" stroke="#333"/>
<g fill="none" stroke="#2c2c2c" stroke-width="3">
<circle cx="943" cy="611" r="7" stroke-width="4"/><path d="M943 600 947 606M952 605 950 612M952 617 945 617M943 622 939 616M934 617 936 610M934 605 941 605" stroke-width="4"/>
<path d="M985 605C975 601 968 608 968 612C968 620 978 624 985 617M985 601V609H978"/>
<path d="M1006 602V620M1014 602V620" stroke-width="6" stroke-linecap="round"/>
<rect x="1036" y="602" width="18" height="18" rx="3" stroke-width="1.500"/>
<circle cx="1079" cy="611" r="7" stroke-width="5"/><circle cx="1079" cy="611" r="11" stroke-width="2.500" stroke-dasharray="4 3.500"/>
<rect x="1169" y="600" width="24" height="23" rx="3" stroke-width="1.500"/><rect x="1178" y="607" width="10" height="11" stroke-width="1.500"/>
</g>
<text x="1045" y="616" text-anchor="middle" style="font-size:13px;font-weight:bold;fill:#2c2c2c">R</text>
<rect x="1102" y="609" width="21" height="15" fill="#f0b400"/><path d="M1106 609V605C1106 597 1119 597 1119 605V609" fill="none" stroke="#f0b400" stroke-width="3"/>
<circle cx="1147" cy="611" r="10.500" fill="url(#sg)"/><path d="M1140 604C1146 600 1152 602 1154 606" fill="none" stroke="#8a6a5a" stroke-width="3"/>
<path d="M1215 623 1208 611A8.500 8.500 0 1 1 1222 611Z" fill="#2c2c2c"/><circle cx="1215" cy="606" r="5" fill="none" stroke="#777"/><text x="1215" y="609" text-anchor="middle" style="font-size:7px;fill:#888">F</text>
<path d="M1249 623 1242 611A8.500 8.500 0 1 1 1256 611Z" fill="#2c2c2c"/><circle cx="1249" cy="606" r="5" fill="none" stroke="#777"/><text x="1249" y="609" text-anchor="middle" style="font-size:7px;fill:#888">M</text>
<text x="1272" y="616" style="fill:#c0c0c0">Chn:</text>
<rect x="1299" y="603" width="67" height="18" rx="3" fill="url(#bt)" stroke="#3c3c3c"/><text x="1307" y="615" style="fill:#ccc">PT</text><path d="M1353 609H1361L1357 613Z" fill="#ddd"/>
<rect x="1370" y="603" width="37" height="19" rx="2" fill="#3c3c3c"/><text x="1376" y="616" style="fill:#ccc">1</text><use href="#spin" x="1399" y="606"/>
<rect x="927" y="634" width="626" height="378" fill="#000"/>
<text x="929" y="647" style="font-size:11.500px;fill:#b84e00" textLength="435" lengthAdjust="spacingAndGlyphs">Check:0ms./1ms. MeshGen:0ms. Update[M]:12ms. Mesh:1 Nodes:46 Movable:1  0 0</text>
<g fill="#3f3f3f"><rect x="927" y="948" width="206" height="14"/><rect x="927" y="965" width="206" height="14"/><rect x="927" y="981" width="206" height="14"/><rect x="927" y="997" width="206" height="15"/></g>
<path d="M1030.500 948V962M1085.500 948V962" stroke="#222"/>
<text x="929" y="959" class="s">GTX 1070[T][6.1]</text><text x="1058" y="959" class="s">%83</text><text x="1099" y="959" class="s">54°C</text>
<text x="929" y="976" class="s" textLength="109" lengthAdjust="spacingAndGlyphs">Out-of-core used/max:</text><text x="1039" y="976" class="t">0Kb/4Gb</text>
<text x="929" y="992" class="s" textLength="48" lengthAdjust="spacingAndGlyphs">Grey8/16:</text><text x="979" y="992" class="t">0/0</text><text x="1031" y="992" class="s" textLength="50" lengthAdjust="spacingAndGlyphs">Rgb32/64:</text><text x="1083" y="992" class="t">0/0</text>
<text x="929" y="1008" class="s" textLength="103" lengthAdjust="spacingAndGlyphs">Used/free/total vram:</text><svg x="1034" y="996" width="99" height="16"><text x="1" y="12" class="t" textLength="104" lengthAdjust="spacingAndGlyphs">276Mb/6.135Gb/8Gb</text></svg>
<rect x="1141" y="998" width="29" height="14" fill="#3f3f3f"/><rect x="1171" y="998" width="29" height="14" fill="#3f3f3f"/><path d="M1141 1011H1170M1171 1011H1200" stroke="#7aa090"/><text x="1144" y="1009" style="font-size:10.500px;fill:#ccc">Main</text><text x="1174" y="1009" style="font-size:10.500px;fill:#ccc">Noise</text>
<rect x="926" y="1012" width="628" height="28" fill="#454545"/>
<path d="M926 1013H1553M926 1031H1553" stroke="#333"/>
<text x="927" y="1026" class="s" textLength="53" lengthAdjust="spacingAndGlyphs">Rendering:</text><text x="983" y="1026" class="t">100%</text><text x="1022" y="1026" class="s" textLength="36" lengthAdjust="spacingAndGlyphs">Ms/sec:</text><text x="1060" y="1026" class="t">0</text><text x="1076" y="1026" class="s" textLength="26" lengthAdjust="spacingAndGlyphs">Time:</text><text x="1105" y="1026" class="t" textLength="138" lengthAdjust="spacingAndGlyphs">小时 : 分钟 : 秒/小时 : 分钟 : 秒</text><text x="1251" y="1026" class="s" textLength="62" lengthAdjust="spacingAndGlyphs">Spp/maxspp:</text><text x="1316" y="1026" class="t" textLength="40" lengthAdjust="spacingAndGlyphs">800/800</text><text x="1372" y="1026" class="s">Tri:</text><text x="1389" y="1026" class="t">0/396</text><text x="1426" y="1026" class="s">Mesh:</text><text x="1460" y="1026" class="t">1</text><text x="1480" y="1026" class="s">Hair:</text><text x="1505" y="1026" class="t">0</text>
<rect x="928" y="1032" width="625" height="5" fill="#44d860"/>

<!-- Logo -->
<circle cx="1784" cy="946" r="24" fill="#fff" stroke="#2a8cf0" stroke-width="2"/><circle cx="1784" cy="946" r="21" fill="none" stroke="#222" stroke-width="1"/>
<path d="M1777 940H1791L1788 951 1784 955 1780 951Z" fill="#111"/><path d="M1777 940C1772 939 1770 937 1768 934M1771 938 1774 933M1773 939 1776 935M1791 940C1796 939 1798 937 1800 934M1797 938 1794 933M1795 939 1792 935" fill="none" stroke="#111" stroke-width="1.500"/>
<text x="1784" y="963" text-anchor="middle" class="k" style="font-size:8px;font-weight:bold">行走者</text>

<!-- Red arrows -->
<g stroke="#f00" stroke-width="2" fill="none"><path d="M443 275 478 355" marker-end="url(#ah)"/><path d="M950 208 713 337" marker-end="url(#ah)"/><path d="M815 660 753 623" marker-end="url(#ah)"/></g>
</svg>
</body></html>
